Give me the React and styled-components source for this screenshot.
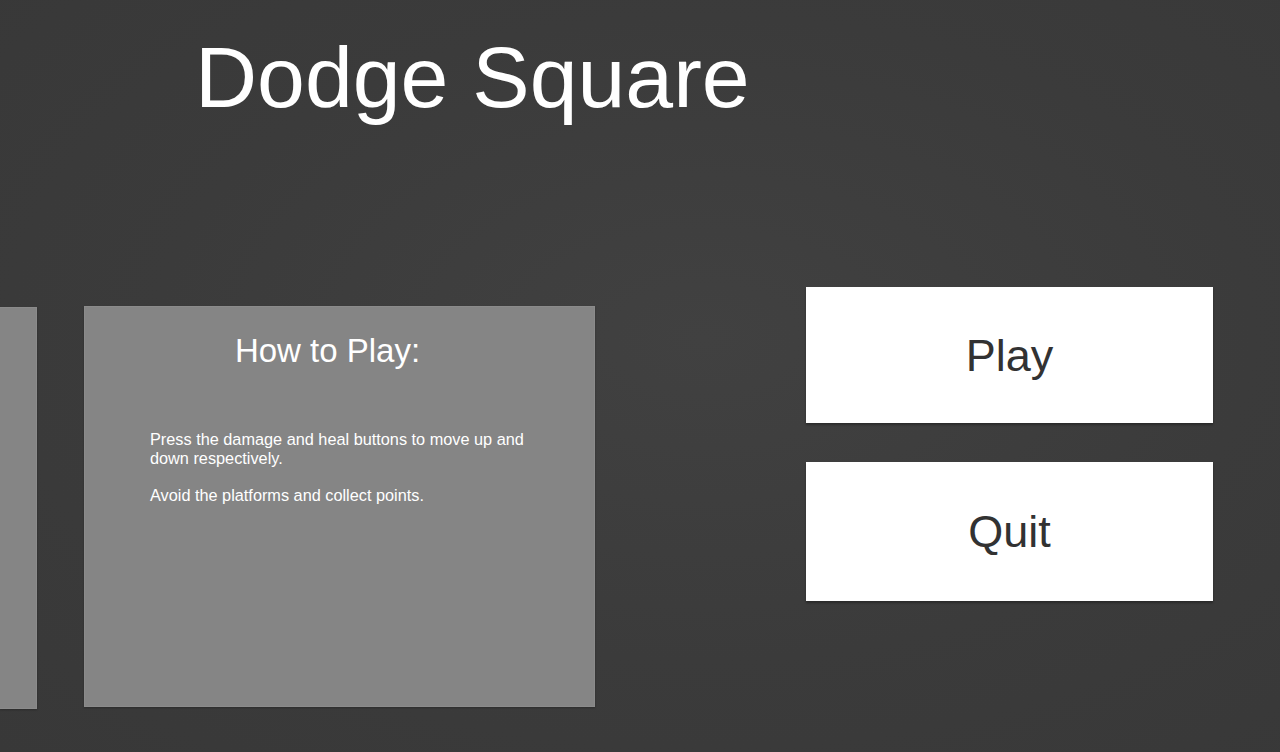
import React from "react";
import styled, { createGlobalStyle } from "styled-components";

const GlobalStyle = createGlobalStyle`
  html, body {
    margin: 0;
    padding: 0;
    background: #3b3b3b;
    overflow: hidden;
  }
  * {
    box-sizing: border-box;
  }
`;

const Screen = styled.div`
  width: 1280px;
  height: 752px;
  display: flex;
  flex-direction: column;
  background: radial-gradient(ellipse at 55% 45%, #414141 0%, #3b3b3b 55%, #383838 100%);
  font-family: "Liberation Sans", Arial, sans-serif;
  overflow: hidden;
`;

const Title = styled.h1`
  margin: 34px 0 0 195px;
  color: #ffffff;
  font-weight: 400;
  font-size: 86px;
  line-height: 1;
  height: 86px;
`;

const Content = styled.div`
  display: flex;
  align-items: flex-start;
  margin-top: 167px;
`;

const Panel = styled.div`
  background-color: #858585;
  border: 1px solid #8b8b8b;
  box-shadow: 0 1px 2px rgba(0, 0, 0, 0.25);
`;

const SidePanel = styled(Panel)`
  width: 37px;
  height: 402px;
  margin-top: 20px;
  border-left: none;
`;

const HelpPanel = styled(Panel)`
  width: 511px;
  height: 401px;
  margin-top: 19px;
  margin-left: 47px;
  padding: 27px 60px 0 65px;
  display: flex;
  flex-direction: column;
`;

const Heading = styled.h2`
  margin: 0;
  padding-right: 29px;
  color: #ffffff;
  font-weight: 400;
  font-size: 33px;
  line-height: 1;
  text-align: center;
`;

const Instructions = styled.div`
  margin-top: 63px;
  color: #ffffff;
  font-size: 16.3px;
  line-height: 18.5px;
`;

const Line = styled.p`
  margin: 0;
  & + & {
    margin-top: 18.5px;
  }
`;

const Menu = styled.div`
  width: 407px;
  margin-left: 211px;
  display: flex;
  flex-direction: column;
  gap: 39px;
`;

const MenuButton = styled.button`
  height: ${(p) => p.$height}px;
  width: 100%;
  border: none;
  outline: none;
  background-color: #ffffff;
  color: #323232;
  font-family: "Liberation Sans", Arial, sans-serif;
  font-size: 45px;
  line-height: 1;
  display: flex;
  align-items: center;
  justify-content: center;
  box-shadow: 0 2px 2px rgba(0, 0, 0, 0.3);
  cursor: pointer;
`;

export default function App() {
  return (
    <>
      <GlobalStyle />
      <Screen>
        <Title>Dodge Square</Title>
        <Content>
          <SidePanel />
          <HelpPanel>
            <Heading>How to Play:</Heading>
            <Instructions>
              <Line>
                Press the damage and heal buttons to move up and down
                respectively.
              </Line>
              <Line>Avoid the platforms and collect points.</Line>
            </Instructions>
          </HelpPanel>
          <Menu>
            <MenuButton $height={136}>Play</MenuButton>
            <MenuButton $height={139}>Quit</MenuButton>
          </Menu>
        </Content>
      </Screen>
    </>
  );
}
